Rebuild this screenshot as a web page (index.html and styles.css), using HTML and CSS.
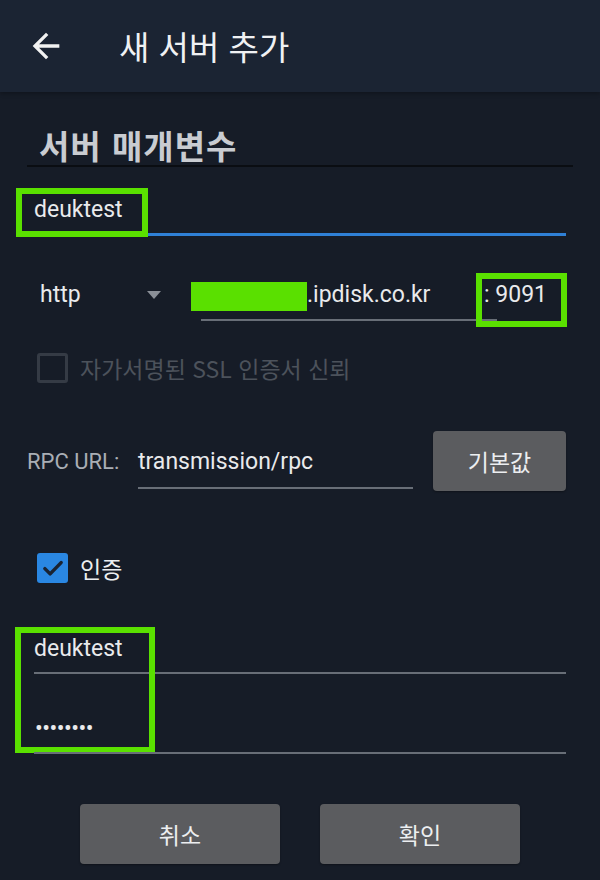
FILE: index.html
```html
<!DOCTYPE html>
<html lang="ko">
<head>
<meta charset="utf-8">
<title>새 서버 추가</title>
<link rel="stylesheet" href="styles.css">
</head>
<body>
<header class="appbar">
  <svg class="back" viewBox="0 0 24 24" width="40" height="40"><path d="M20 11H7.83l5.59-5.59L12 4l-8 8 8 8 1.41-1.41L7.83 13H20v-2z" fill="#f2f2f2"/></svg>
  <h1 class="title">새 서버 추가</h1>
</header>
<main class="form">
  <h2 class="section-title">서버 매개변수</h2>

  <div class="field field-name">
    <span class="text">deuktest</span>
    <span class="mark mark-name"></span>
  </div>

  <div class="host-row">
    <div class="select">
      <span class="text">http</span>
      <svg class="caret" viewBox="0 0 14 8" width="14" height="8"><polygon points="0,0 14,0 7,8" fill="#8a8f97"/></svg>
    </div>
    <div class="field field-host">
      <span class="hidden-host"></span><span class="text">.ipdisk.co.kr</span>
      <span class="redact"></span>
    </div>
    <div class="port">
      <span class="text">: 9091</span>
      <span class="mark mark-port"></span>
    </div>
  </div>

  <div class="check-row disabled">
    <span class="box"></span>
    <span class="label">자가서명된 SSL 인증서 신뢰</span>
  </div>

  <div class="rpc-row">
    <span class="rpc-label">RPC URL:</span>
    <div class="field field-rpc"><span class="text">transmission/rpc</span></div>
    <button class="btn btn-default">기본값</button>
  </div>

  <div class="check-row checked">
    <span class="box">
      <svg viewBox="0 0 24 24" width="30" height="30"><path d="M5.5 12.5l4.2 4.2 8.8-9" fill="none" stroke="#1a2331" stroke-width="2.8" stroke-linecap="round" stroke-linejoin="round"/></svg>
    </span>
    <span class="label">인증</span>
  </div>

  <div class="field field-user">
    <span class="text">deuktest</span>
    <span class="mark mark-user"></span>
  </div>
  <div class="field field-pass">
    <span class="text dots">••••••••</span>
  </div>

  <div class="actions">
    <button class="btn btn-action">취소</button>
    <button class="btn btn-action">확인</button>
  </div>
</main>
</body>
</html>
```

FILE: styles.css
```css
* { box-sizing: border-box; }
html, body {
  margin: 0;
  padding: 0;
  width: 600px;
  height: 880px;
  background: #161c27;
  overflow: hidden;
  font-family: Roboto, "Noto Sans CJK KR", sans-serif;
  color: #e9eaec;
}

.appbar {
  height: 92px;
  background: #1b2433;
  display: flex;
  align-items: center;
  padding-left: 26px;
  box-shadow: 0 2px 4px rgba(0,0,0,0.25);
}
.back { display: block; }
.title {
  margin: 0 0 0 53px;
  font-family: "Noto Sans CJK KR", sans-serif;
  font-weight: 400;
  font-size: 33px;
  line-height: 40px;
  color: #f0f1f3;
}

.form { display: flex; flex-direction: column; }

.section-title {
  margin: 33px 27px 0;
  padding-left: 12px;
  font-family: "Noto Sans CJK KR", sans-serif;
  font-weight: 700;
  font-size: 33px;
  letter-spacing: 1px;
  line-height: 40px;
  color: #c9ccd1;
  border-bottom: 2px solid #0a0d12;
}

.field {
  position: relative;
  font-size: 23px;
  line-height: 30px;
  color: #e9eaec;
}
.field-name {
  margin: 28px 34px 0;
  padding-bottom: 8px;
  border-bottom: 3px solid #2f80d6;
}

.mark {
  position: absolute;
  border: 6px solid #5ae000;
}
.mark-name { left: -18px; top: -7px; width: 132px; height: 49px; }

.host-row {
  display: flex;
  margin-top: 44px;
  align-items: flex-start;
}
.select {
  margin-left: 40px;
  width: 121px;
  height: 30px;
  display: flex;
  align-items: center;
  justify-content: space-between;
  font-size: 23px;
  line-height: 30px;
}
.caret { display: block; margin-top: 0; }
.field-host {
  margin-left: 40px;
  width: 296px;
  padding-bottom: 9px;
  border-bottom: 2px solid #686e77;
}
.hidden-host { display: inline-block; width: 106px; }
.redact {
  position: absolute;
  left: -10px;
  top: 2px;
  width: 116px;
  height: 29px;
  background: #5ae000;
}
.port {
  position: relative;
  margin-left: -13px;
  font-size: 23px;
  line-height: 30px;
}
.mark-port { left: -8px; top: -7px; width: 91px; height: 54px; }

.check-row {
  display: flex;
  align-items: center;
  margin-left: 37px;
}
.check-row .box {
  width: 31px;
  height: 30px;
  border-radius: 3px;
  display: flex;
  align-items: center;
  justify-content: center;
}
.check-row .label {
  margin-left: 12px;
  font-family: "Noto Sans CJK KR", sans-serif;
  font-size: 23px;
  line-height: 30px;
}
.disabled { margin-top: 32px; }
.disabled .box { border: 3px solid #353b45; }
.disabled .label { color: #4c525b; }
.checked { margin-top: 62px; }
.checked .box { background: #2a87e2; }
.checked .label { color: #eceef0; }

.rpc-row {
  display: flex;
  align-items: flex-start;
  margin-top: 48px;
  height: 60px;
}
.rpc-label {
  margin: 16px 0 0 27px;
  font-size: 22px;
  line-height: 30px;
  color: #a9aeb5;
  width: 111px;
}
.field-rpc {
  margin-top: 16px;
  width: 275px;
  padding-bottom: 10px;
  border-bottom: 2px solid #686e77;
}

.btn {
  border: none;
  border-radius: 4px;
  background: #5b5c5f;
  color: #eceef0;
  font-family: "Noto Sans CJK KR", sans-serif;
  font-size: 23px;
  padding: 0;
  box-shadow: 0 1px 2px rgba(0,0,0,0.35);
}
.btn-default {
  margin-left: 20px;
  width: 133px;
  height: 60px;
}

.field-user {
  margin: 51px 34px 0;
  padding-bottom: 8px;
  border-bottom: 2px solid #686e77;
}
.mark-user { left: -19px; top: -7px; width: 140px; height: 126px; }
.field-pass {
  margin: 40px 34px 0;
  padding-bottom: 8px;
  border-bottom: 2px solid #686e77;
}
.dots { letter-spacing: -0.5px; padding-left: 1px; }

.actions {
  display: flex;
  justify-content: center;
  gap: 40px;
  margin-top: 50px;
}
.btn-action { width: 200px; height: 60px; }
```
